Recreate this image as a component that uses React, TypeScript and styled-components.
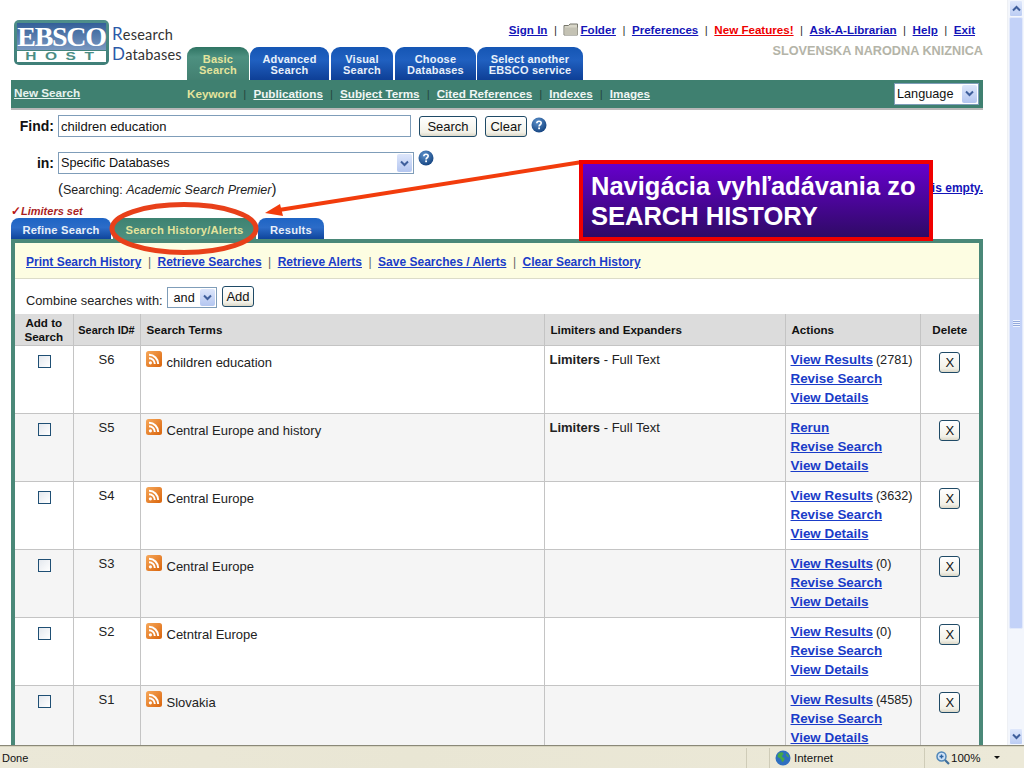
import React from "react";
import styled, { createGlobalStyle } from "styled-components";

const GlobalStyle = createGlobalStyle`
  html, body {
    margin: 0;
    padding: 0;
    background: #fff;
    overflow: hidden;
  }
  * {
    box-sizing: border-box;
  }
  body {
    font-family: "Liberation Sans", Arial, sans-serif;
    color: #222;
  }
`;

const Win = styled.div`
  position: relative;
  display: flex;
  flex-direction: column;
  width: 1024px;
  height: 768px;
  overflow: hidden;
`;

const Viewport = styled.div`
  position: relative;
  display: flex;
  height: 745px;
`;

const Page = styled.div`
  width: 1007px;
  height: 745px;
  padding: 0 24px 0 11px;
  overflow: hidden;
`;

const Scrollbar = styled.div`
  display: flex;
  flex-direction: column;
  width: 17px;
  padding: 0 1px;
  background: #f3f6fc;
  border-left: 1px solid #eef0f4;
`;

const ScrollBtn = styled.div`
  display: flex;
  align-items: center;
  justify-content: center;
  height: 17px;
  background: linear-gradient(#dfe8fb, #bccdf4);
  border: 1px solid #f4f7fd;
  border-radius: 2px;
`;

const Thumb = styled.div`
  display: flex;
  align-items: center;
  justify-content: center;
  height: 612px;
  background: #c3d2f8;
  border: 1px solid #e2e9fb;
  border-radius: 2px;
`;

const Grip = styled.div`
  width: 7px;
  height: 7px;
  background: repeating-linear-gradient(#eef3fe 0 1px, #93a9dc 1px 2px);
`;

const ScrollRest = styled.div`
  flex: 1;
`;

/* header */
const Header = styled.header`
  display: flex;
  height: 80px;
`;

const Brand = styled.div`
  display: flex;
  width: 176px;
  padding: 20px 0 0 3px;
`;

const Logo = styled.div`
  display: flex;
  flex-direction: column;
  align-items: center;
  width: 95px;
  height: 45px;
  padding: 3px 3px 2px;
  background: linear-gradient(#4f8f8a, #3f7f78);
  border-radius: 5px;
`;

const LogoTop = styled.div`
  width: 100%;
  height: 27px;
  background: linear-gradient(#335f99, #7a98c0);
  color: #fff;
  font: bold 28px/27px "Liberation Serif", serif;
  letter-spacing: -1.3px;
  text-align: center;
  white-space: nowrap;
`;

const LogoBottom = styled.div`
  display: flex;
  justify-content: center;
  width: 100%;
  height: 11px;
  margin-top: 1px;
  background: #fff;
  color: #4a8d84;
`;

const LogoHost = styled.span`
  display: block;
  font: bold 10px/11px "Liberation Sans", sans-serif;
  letter-spacing: 5.5px;
  margin-right: -5.5px;
  transform: scaleX(1.55);
`;

const BrandText = styled.div`
  margin: 5px 0 0 3px;
  font: 14.5px/20px Lato, sans-serif;
  letter-spacing: 0.2px;
  color: #333;

  b {
    font-weight: 400;
    font-size: 17px;
    line-height: 1;
    color: #2c5aa8;
  }
`;

const Tabs = styled.nav`
  display: flex;
  align-self: flex-end;
  gap: 1px;
`;

const Tab = styled.div<{ $active?: boolean; $w: number; $gap?: number }>`
  display: flex;
  align-items: center;
  justify-content: center;
  width: ${(p) => p.$w}px;
  height: 33px;
  margin-right: ${(p) => p.$gap ?? 0}px;
  padding-top: 3px;
  border-radius: 9px 9px 0 0;
  background: ${(p) =>
    p.$active
      ? "linear-gradient(#2f7463, #4d9080 30%, #438071)"
      : "linear-gradient(#1556b4, #2060c0 40%, #0e3f96)"};
  color: ${(p) => (p.$active ? "#e4e49c" : "#e8f0fa")};
  font: bold 11px/11px "Liberation Sans", sans-serif;
  letter-spacing: 0.2px;
  text-align: center;
`;

const HeaderRight = styled.div`
  flex: 1;
  min-width: 0;
  display: flex;
  flex-direction: column;
  align-items: flex-end;
  padding-top: 22px;
`;

const TopLinks = styled.div`
  display: flex;
  flex: none;
  align-items: center;
  height: 15px;
  padding-right: 8px;
  font-size: 11.6px;
  font-weight: bold;
  color: #333;
  white-space: nowrap;
`;

const TopLink = styled.a<{ $red?: boolean }>`
  color: ${(p) => (p.$red ? "#ee0000" : "#1414b8")};
  text-decoration: underline;
`;

const TopSep = styled.span`
  margin: 0 6.5px;
  font-weight: normal;
`;

const FolderIcon = styled.svg`
  margin-right: 1px;
`;

const Library = styled.div`
  margin-top: 7px;
  font-size: 12.7px;
  font-weight: bold;
  line-height: 14px;
  color: #b4b4a8;
  white-space: nowrap;
`;

/* nav */
const NavBar = styled.div`
  display: flex;
  align-items: center;
  height: 30px;
  padding: 0 4px 1px 3px;
  background: #3f8070;
  border-bottom: 2px solid #b8b8b8;
  font-size: 11.7px;
  font-weight: bold;
  color: #dfe8e4;
`;

const NewSearch = styled.a`
  width: 173px;
  color: #e6f2ee;
  text-decoration: underline;
  margin-top: -2px;
`;

const Keyword = styled.span`
  color: #e4e49c;
`;

const NavLink = styled.a`
  color: #f0f6f4;
  text-decoration: underline;
`;

const NavSep = styled.span`
  margin: 0 7px;
  font-weight: normal;
  color: #26483f;
`;

const SelectBox = styled.div<{ $w: number; $h: number }>`
  display: flex;
  align-items: center;
  justify-content: space-between;
  flex: none;
  width: ${(p) => p.$w}px;
  height: ${(p) => p.$h}px;
  padding: 0 1px 0 2px;
  background: #fff;
  border: 1px solid #7f9db9;
  font-size: 12.7px;
  font-weight: normal;
  color: #111;
`;

const SelectArrow = styled.span`
  display: flex;
  align-items: center;
  justify-content: center;
  width: 15px;
  align-self: stretch;
  margin: 1px 0;
  background: linear-gradient(#dde6fb, #b4c6f0);
  border-radius: 2px;
`;

const Spacer = styled.div`
  flex: 1;
`;

/* search form */
const FormRow = styled.div<{ $top: number }>`
  display: flex;
  align-items: center;
  height: 22px;
  margin-top: ${(p) => p.$top}px;
`;

const FormLabel = styled.label`
  width: 43px;
  margin-right: 4px;
  font-size: 14px;
  font-weight: bold;
  text-align: right;
  color: #111;
`;

const TextInput = styled.input`
  width: 353px;
  height: 22px;
  padding: 0 2px;
  border: 1px solid #7f9db9;
  font: 13px "Liberation Sans", sans-serif;
  color: #111;
  outline: none;
`;

const Button = styled.button<{ $w: number; $h?: number }>`
  flex: none;
  width: ${(p) => p.$w}px;
  height: ${(p) => p.$h ?? 21}px;
  padding: 0;
  background: linear-gradient(#fff, #f2f1e8 80%, #dcd8c8);
  border: 1px solid #1f4a66;
  border-radius: 3px;
  font: 13px "Liberation Sans", sans-serif;
  color: #111;
`;

const FindSearch = styled(Button)`
  margin-left: 8px;
`;

const FindClear = styled(Button)`
  margin-left: 8px;
`;

const HelpIcon = styled.svg<{ $up?: number }>`
  flex: none;
  margin: ${(p) => -(p.$up ?? 0)}px 0 0 4px;
`;

const Searching = styled.div`
  display: flex;
  align-items: center;
  justify-content: space-between;
  height: 18px;
  margin-top: 5px;
  padding-left: 47px;
  font-size: 12.5px;
  color: #222;

  em {
    font-style: italic;
  }
`;

const Paren = styled.span`
  font-size: 15px;
`;

const EmptyLink = styled.a`
  font-size: 12px;
  font-weight: bold;
  color: #1414b8;
  text-decoration: underline;
`;

const LimitersSet = styled.div`
  height: 16px;
  margin-top: 5px;
  padding-top: 2px;
  font-size: 11px;
  line-height: 14px;
  font-weight: bold;
  font-style: italic;
  color: #aa1f1f;
  white-space: nowrap;
`;

const Check = styled.span`
  font-size: 12px;
  line-height: 1;
  font-style: normal;
  color: #b81414;
`;

const SubTabs = styled.div`
  display: flex;
  height: 21px;
  gap: 2px;
`;

const SubTab = styled.div<{ $active?: boolean; $w: number }>`
  display: flex;
  align-items: center;
  justify-content: center;
  width: ${(p) => p.$w}px;
  padding-top: 2px;
  border-radius: 8px 8px 0 0;
  background: ${(p) =>
    p.$active
      ? "linear-gradient(#3e8271, #4d9080)"
      : "linear-gradient(#1e64c4, #2c6cc8 45%, #0f459c)"};
  color: ${(p) => (p.$active ? "#e4e49c" : "#e8f0fa")};
  font-size: 11.2px;
  font-weight: bold;
  letter-spacing: 0.2px;
`;

/* history panel */
const Panel = styled.section`
  border: 4px solid #4a8878;
  border-bottom: 0;
`;

const HistoryBar = styled.div`
  display: flex;
  align-items: center;
  height: 36px;
  padding: 3px 0 0 11px;
  background: #fdfde2;
  border-bottom: 1px solid #dcdcc8;
  font-size: 12px;
  font-weight: bold;
`;

const HistoryLink = styled.a`
  color: #1a3cc8;
  text-decoration: underline;
`;

const HistorySep = styled.span`
  margin: 0 6.5px;
  font-weight: normal;
  color: #666;
`;

const CombineRow = styled.div`
  display: flex;
  align-items: flex-start;
  height: 35px;
  padding: 6px 0 0 11px;
  font-size: 12.8px;
`;

const CombineLabel = styled.span`
  width: 141px;
  margin-top: 8px;
  white-space: nowrap;
`;

const CombineSelect = styled(SelectBox)`
  margin-top: 2px;
`;

const AddButton = styled(Button)`
  margin: 1px 0 0 5px;
`;

const Table = styled.table`
  width: 100%;
  border-collapse: collapse;
  table-layout: fixed;
  font-size: 13px;
`;

const Th = styled.th<{ $left?: boolean; $w: number }>`
  width: ${(p) => p.$w}px;
  height: 31px;
  padding: 1px 0 0 ${(p) => (p.$left ? 6 : 0)}px;
  background: #dcdcdc;
  border-right: 1px solid #c4c4c4;
  border-bottom: 1px solid #c4c4c4;
  font-size: 11.6px;
  line-height: 14px;
  font-weight: bold;
  text-align: ${(p) => (p.$left ? "left" : "center")};
  color: #111;

  &:last-child {
    border-right: 0;
  }
`;

const IdTh = styled(Th)`
  font-size: 10.9px;
`;

const Tr = styled.tr<{ $alt: boolean }>`
  height: 68px;
  background: ${(p) => (p.$alt ? "#f5f5f5" : "#fff")};
`;

const Td = styled.td<{ $center?: boolean }>`
  padding: 6px 0 0 ${(p) => (p.$center ? 0 : 5)}px;
  vertical-align: top;
  border-right: 1px solid #c4c4c4;
  border-bottom: 1px solid #c4c4c4;
  text-align: ${(p) => (p.$center ? "center" : "left")};

  &:last-child {
    border-right: 0;
  }
`;

const Box = styled.input`
  appearance: none;
  display: block;
  width: 13px;
  height: 13px;
  margin: 3px 0 0 23px;
  background: linear-gradient(135deg, #e4e8ee, #fff);
  border: 1px solid #1f4f74;
`;

const IdText = styled.div`
  line-height: 15px;
`;

const TermCell = styled.div`
  display: flex;
  align-items: flex-start;
  gap: 5px;
  margin-top: -1px;
`;

const TermText = styled.span`
  margin-top: 4px;
  line-height: 15px;
`;

const Limit = styled.div`
  line-height: 15px;
`;

const ActionList = styled.div`
  margin-top: -2px;
`;

const ActionLine = styled.div`
  height: 19px;
  line-height: 19px;
  white-space: nowrap;
`;

const ActionLink = styled.a`
  font-size: 13.4px;
  font-weight: bold;
  color: #1a3cc8;
  text-decoration: underline;
`;

const Count = styled.span`
  margin-left: 3px;
  font-size: 12.7px;
`;

/* overlay annotations */
const Marks = styled.svg`
  position: absolute;
  left: 0;
  top: 0;
  pointer-events: none;
`;

const Callout = styled.div`
  position: absolute;
  left: 579px;
  top: 160px;
  width: 354px;
  height: 81px;
  padding: 7px 0 0 8px;
  background: linear-gradient(#6600cc, #2f0a66);
  border: 4px solid #f00000;
  font-size: 25.5px;
  line-height: 30px;
  font-weight: bold;
  color: #fff;
  white-space: nowrap;
`;

/* status bar */
const StatusBar = styled.footer`
  display: flex;
  align-items: center;
  height: 23px;
  padding-top: 1px;
  background: linear-gradient(90deg, #ebe8d8, #e9e6d4 40%, #ece9d8);
  border-top: 1px solid #8a8878;
  box-shadow: inset 0 1px 0 #d8d5c0;
  font-size: 11.5px;
  color: #111;
`;

const StatusDone = styled.div`
  flex: 1;
  padding-left: 2px;
  font-size: 11px;
`;

const StatusCell = styled.div<{ $w: number }>`
  display: flex;
  align-items: center;
  gap: 3px;
  width: ${(p) => p.$w}px;
  height: 20px;
  padding-left: 5px;
  border-left: 1px solid #cfccb8;
`;

const ZoomCell = styled(StatusCell)`
  gap: 1px;
  padding-left: 11px;
`;

const Caret = styled.span`
  width: 0;
  height: 0;
  margin-left: 13px;
  border: 3px solid transparent;
  border-top: 3px solid #111;
  border-bottom: 0;
`;

const Chevron = ({ up }: { up?: boolean }) => (
  <svg width="9" height="7" viewBox="0 0 9 7">
    <path
      d={up ? "M1 5.5 4.5 2 8 5.5" : "M1 1.5 4.5 5 8 1.5"}
      fill="none"
      stroke="#3f5f9c"
      strokeWidth="2"
    />
  </svg>
);

const Help = ({ up }: { up?: number }) => (
  <HelpIcon $up={up} width="16" height="16" viewBox="0 0 16 16">
    <defs>
      <radialGradient id="helpFill" cx="40%" cy="30%" r="75%">
        <stop offset="0" stopColor="#5d92cc" />
        <stop offset="1" stopColor="#12417e" />
      </radialGradient>
    </defs>
    <circle cx="8" cy="8" r="7.5" fill="url(#helpFill)" />
    <path
      d="M5.8 6.2C5.9 4.9 6.8 4.2 8 4.2c1.3 0 2.2.8 2.2 1.9 0 1.7-2.1 1.6-2.1 3.3"
      fill="none"
      stroke="#fff"
      strokeWidth="1.6"
    />
    <rect x="7.2" y="10.4" width="1.8" height="1.8" fill="#fff" />
  </HelpIcon>
);

const RssIcon = () => (
  <svg width="16" height="16" viewBox="0 0 16 16">
    <defs>
      <linearGradient id="rssFill" x1="0" y1="0" x2="1" y2="1">
        <stop offset="0" stopColor="#f7a85a" />
        <stop offset="1" stopColor="#d9640c" />
      </linearGradient>
    </defs>
    <rect width="16" height="16" rx="2.5" fill="url(#rssFill)" />
    <circle cx="4.4" cy="11.8" r="1.6" fill="#fff" />
    <path
      d="M3 7.2a5.8 5.8 0 0 1 5.8 5.8M3 3.8A9.2 9.2 0 0 1 12.2 13"
      fill="none"
      stroke="#fff"
      strokeWidth="2"
    />
  </svg>
);

const Globe = () => (
  <svg width="16" height="16" viewBox="0 0 16 16">
    <circle cx="8" cy="8" r="7.5" fill="#2f6fc0" />
    <path
      d="M4 3c2-1.400 4-.8 4.500.4.300 1-1.500 1.600-1.500 2.800 0 1.300 2.300 1 2.500 2.400.2 1.500-1 3-2.200 3.700-.8-1-.8-2.400-1.600-3.200C5 8 2.800 8 2.500 6.600 2.400 5.400 3 4 4 3Z"
      fill="#46a84a"
    />
    <path d="M11 3.500c1.500.6 2.700 2.200 2.900 3.600-1.100.3-2-.6-2.500-1.500-.3-.6-.6-1.300-.4-2.100Z" fill="#46a84a" />
  </svg>
);

const Magnifier = () => (
  <svg width="14" height="14" viewBox="0 0 14 14">
    <circle cx="5.500" cy="5.500" r="4.500" fill="#cfe2f6" stroke="#4f86b8" strokeWidth="1.500" />
    <path d="M3.500 5.500h4M5.500 3.500v4" stroke="#2a62a0" strokeWidth="1.400" />
    <path d="M9 9l4 4" stroke="#3f6f9c" strokeWidth="2.200" />
  </svg>
);

const Folder = () => (
  <FolderIcon width="16" height="13" viewBox="0 0 16 13">
    <path d="M1 2.500h4.500L7 1h7.500v11H1Z" fill="#d8d6c8" stroke="#77776c" strokeWidth="1" />
    <path d="M1.500 4.500h13V12h-13Z" fill="#c4c2b4" />
  </FolderIcon>
);

type Row = {
  id: string;
  term: string;
  limited?: boolean;
  rerun?: boolean;
  count?: string;
};

const rows: Row[] = [
  { id: "S6", term: "children education", limited: true, count: "2781" },
  { id: "S5", term: "Central Europe and history", limited: true, rerun: true },
  { id: "S4", term: "Central Europe", count: "3632" },
  { id: "S3", term: "Central Europe", count: "0" },
  { id: "S2", term: "Cetntral Europe", count: "0" },
  { id: "S1", term: "Slovakia", count: "4585" },
];

const topLinks: [string, boolean?][] = [
  ["Preferences"],
  ["New Features!", true],
  ["Ask-A-Librarian"],
  ["Help"],
  ["Exit"],
];

const navLinks = ["Publications", "Subject Terms", "Cited References", "Indexes", "Images"];

const historyLinks = [
  "Print Search History",
  "Retrieve Searches",
  "Retrieve Alerts",
  "Save Searches / Alerts",
  "Clear Search History",
];

export default function App() {
  return (
    <Win>
      <GlobalStyle />
      <Viewport>
        <Page>
          <Header>
            <Brand>
              <Logo>
                <LogoTop>EBSCO</LogoTop>
                <LogoBottom><LogoHost>HOST</LogoHost></LogoBottom>
              </Logo>
              <BrandText>
                <b>R</b>esearch
                <br />
                <b>D</b>atabases
              </BrandText>
            </Brand>
            <Tabs>
              <Tab $active $w={62}>Basic<br />Search</Tab>
              <Tab $w={79} $gap={1}>Advanced<br />Search</Tab>
              <Tab $w={62} $gap={1}>Visual<br />Search</Tab>
              <Tab $w={81}>Choose<br />Databases</Tab>
              <Tab $w={106}>Select another<br />EBSCO service</Tab>
            </Tabs>
            <HeaderRight>
              <TopLinks>
                <TopLink>Sign In</TopLink>
                <TopSep>|</TopSep>
                <Folder />
                <TopLink>Folder</TopLink>
                {topLinks.map(([label, red]) => (
                  <React.Fragment key={label}>
                    <TopSep>|</TopSep>
                    <TopLink $red={red}>{label}</TopLink>
                  </React.Fragment>
                ))}
              </TopLinks>
              <Library>SLOVENSKA NARODNA KNIZNICA</Library>
            </HeaderRight>
          </Header>

          <NavBar>
            <NewSearch>New Search</NewSearch>
            <Keyword>Keyword</Keyword>
            {navLinks.map((label) => (
              <React.Fragment key={label}>
                <NavSep>|</NavSep>
                <NavLink>{label}</NavLink>
              </React.Fragment>
            ))}
            <Spacer />
            <SelectBox $w={85} $h={22}>
              Language
              <SelectArrow><Chevron /></SelectArrow>
            </SelectBox>
          </NavBar>

          <FormRow $top={5}>
            <FormLabel>Find:</FormLabel>
            <TextInput defaultValue="children education" />
            <FindSearch $w={58}>Search</FindSearch>
            <FindClear $w={42}>Clear</FindClear>
            <Help up={2} />
          </FormRow>
          <FormRow $top={15}>
            <FormLabel>in:</FormLabel>
            <SelectBox $w={356} $h={22}>
              Specific Databases
              <SelectArrow><Chevron /></SelectArrow>
            </SelectBox>
            <Help up={10} />
          </FormRow>
          <Searching>
            <span>
              <Paren>(</Paren>Searching: <em>Academic Search Premier</em><Paren>)</Paren>
            </span>
            <EmptyLink>is empty.</EmptyLink>
          </Searching>
          <LimitersSet><Check>✓</Check>Limiters set</LimitersSet>
          <SubTabs>
            <SubTab $w={100}>Refine Search</SubTab>
            <SubTab $active $w={143}>Search History/Alerts</SubTab>
            <SubTab $w={66}>Results</SubTab>
          </SubTabs>

          <Panel>
            <HistoryBar>
              {historyLinks.map((label, i) => (
                <React.Fragment key={label}>
                  {i > 0 && <HistorySep>|</HistorySep>}
                  <HistoryLink>{label}</HistoryLink>
                </React.Fragment>
              ))}
            </HistoryBar>
            <CombineRow>
              <CombineLabel>Combine searches with:</CombineLabel>
              <CombineSelect $w={50} $h={21}>
                &nbsp;and
                <SelectArrow><Chevron /></SelectArrow>
              </CombineSelect>
              <AddButton $w={32} $h={21}>Add</AddButton>
            </CombineRow>
            <Table>
              <thead>
                <tr>
                  <Th $w={58}>Add to<br />Search</Th>
                  <IdTh $w={67}>Search ID#</IdTh>
                  <Th $left $w={404}>Search Terms</Th>
                  <Th $left $w={241}>Limiters and Expanders</Th>
                  <Th $left $w={135}>Actions</Th>
                  <Th $w={59}>Delete</Th>
                </tr>
              </thead>
              <tbody>
                {rows.map((row, i) => (
                  <Tr key={row.id} $alt={i % 2 === 1}>
                    <Td $center><Box type="checkbox" /></Td>
                    <Td $center><IdText>{row.id}</IdText></Td>
                    <Td>
                      <TermCell>
                        <RssIcon />
                        <TermText>{row.term}</TermText>
                      </TermCell>
                    </Td>
                    <Td>
                      {row.limited && <Limit><b>Limiters</b> - Full Text</Limit>}
                    </Td>
                    <Td>
                      <ActionList>
                        <ActionLine>
                          <ActionLink>{row.rerun ? "Rerun" : "View Results"}</ActionLink>
                          {row.count && <Count>({row.count})</Count>}
                        </ActionLine>
                        <ActionLine><ActionLink>Revise Search</ActionLink></ActionLine>
                        <ActionLine><ActionLink>View Details</ActionLink></ActionLine>
                      </ActionList>
                    </Td>
                    <Td $center><Button $w={21} $h={21}>X</Button></Td>
                  </Tr>
                ))}
              </tbody>
            </Table>
          </Panel>
        </Page>

        <Scrollbar>
          <ScrollBtn><Chevron up /></ScrollBtn>
          <Thumb><Grip /></Thumb>
          <ScrollRest />
          <ScrollBtn><Chevron /></ScrollBtn>
        </Scrollbar>

        <Marks width="1007" height="300" viewBox="0 0 1007 300">
          <path d="M582 162 279 210" stroke="#f23c0c" strokeWidth="4" fill="none" />
          <path d="M265 213 280 204 283 216Z" fill="#f23c0c" />
          <ellipse cx="184" cy="228.500" rx="72" ry="24" fill="none" stroke="#e8401a" strokeWidth="5" />
        </Marks>
        <Callout>
          Navigácia vyhľadávania zo
          <br />
          SEARCH HISTORY
        </Callout>
      </Viewport>

      <StatusBar>
        <StatusDone>Done</StatusDone>
        <StatusCell $w={23} />
        <StatusCell $w={155}>
          <Globe />
          Internet
        </StatusCell>
        <ZoomCell $w={100}>
          <Magnifier />
          100%
          <Caret />
        </ZoomCell>
      </StatusBar>
    </Win>
  );
}
